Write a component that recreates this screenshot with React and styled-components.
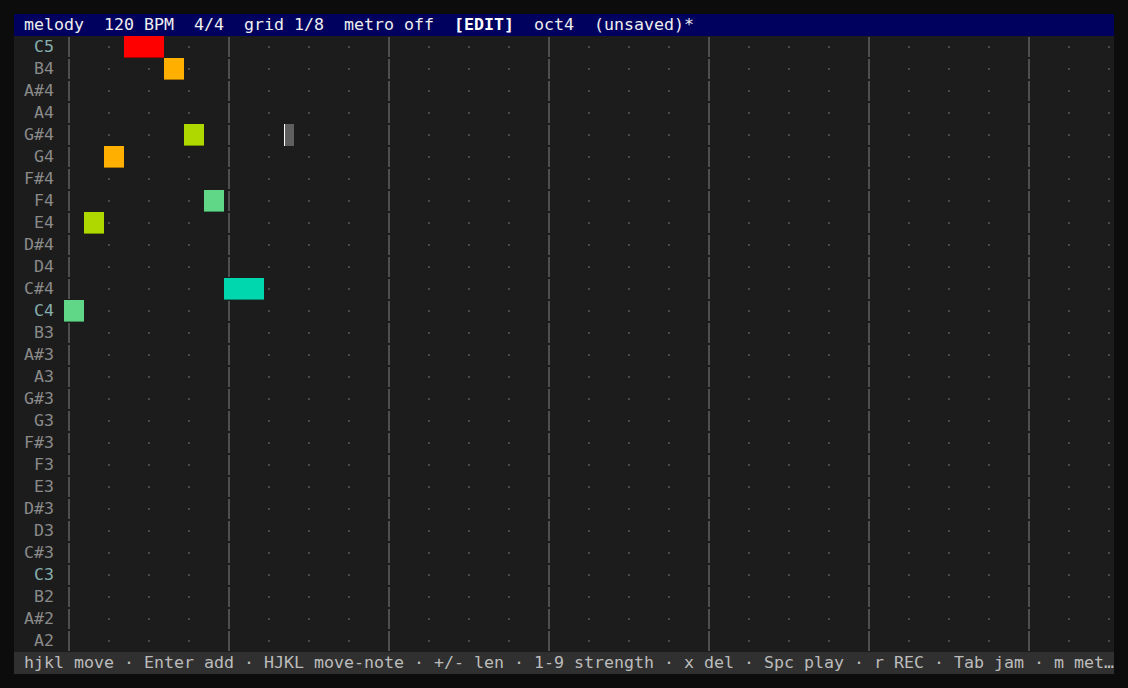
import * as React from "react"
import styled, { createGlobalStyle } from 'styled-components'

const NOTE_NAMES = ["C5", "B4", "A#4", "A4", "G#4", "G4", "F#4", "F4", "E4", "D#4", "D4", "C#4", "C4",
  "B3", "A#3", "A3", "G#3", "G3", "F#3", "F3", "E3", "D#3", "D3", "C#3", "C3", "B2", "A#2", "A2"]

const GRID_COLS = 105 // terminal is 110 cols, first 5 are the label gutter

// notes as step (1/8) + length in steps
const NOTES = [
  { pitch: "C5", step: 3, len: 2, color: "#ff0000" },
  { pitch: "B4", step: 5, len: 1, color: "#ffaf00" },
  { pitch: "G#4", step: 6, len: 1, color: "#afd700" },
  { pitch: "G4", step: 2, len: 1, color: "#ffaf00" },
  { pitch: "F4", step: 7, len: 1, color: "#5fd787" },
  { pitch: "E4", step: 1, len: 1, color: "#afd700" },
  { pitch: "C#4", step: 8, len: 2, color: "#00d7af" },
  { pitch: "C4", step: 0, len: 1, color: "#5fd787" },
]

const CURSOR = { pitch: "G#4", col: 22 }

const HEADER = " melody  120 BPM  4/4  grid 1/8  metro off  "
const FOOTER = " hjkl move · Enter add · HJKL move-note · +/- len · 1-9 strength · x del · Spc play · r REC · Tab jam · m met…"

const cellFor = (pitch, c) => {
  const step = Math.floor(c / 2)
  const note = NOTES.find(n => n.pitch === pitch && step >= n.step && step < n.step + n.len)
  if (note) return { fill: note.color }
  if (CURSOR.pitch === pitch && CURSOR.col === c) return { cursor: true }
  if (c % 16 === 0) return { mark: "bar" }
  if (c % 4 === 0) return { mark: "dot" }
  return {}
}

const App = () => {
  return (
    <Screen>
      <GlobalStyle />
      <Terminal>
        <Header>
          {HEADER}<Bold>[EDIT]</Bold>{"  oct4  (unsaved)*"}
        </Header>
        {NOTE_NAMES.map(pitch => (
          <Row key={pitch}>
            <Label $root={pitch.startsWith("C") && !pitch.includes("#")}>{pitch.padStart(4, " ") + " "}</Label>
            {Array.from({ length: GRID_COLS }, (_, c) => {
              const cell = cellFor(pitch, c)
              return <Cell key={c} $fill={cell.fill} $mark={cell.mark} $cursor={cell.cursor} />
            })}
          </Row>
        ))}
        <Footer>{FOOTER}</Footer>
      </Terminal>
    </Screen>
  )
}

const GlobalStyle = createGlobalStyle`
  html, body {
    margin: 0;
    padding: 0;
    background: #0c0c0d;
  }
`

//Layout
const Screen = styled.div`
  display: flex;
  padding: 14px;
  width: 1128px;
  height: 688px;
  box-sizing: border-box;
  background: #0c0c0d;
`

const Terminal = styled.div`
  display: flex;
  flex-direction: column;
  width: 1100px;
  background: #1c1c1c;
  font-family: "DejaVu Sans Mono", "Liberation Mono", monospace;
  font-size: 16.61px;
  line-height: 22px;
  white-space: pre;
`

const Header = styled.div`
  height: 22px;
  background: #00005f;
  color: #eeeeee;
  overflow: hidden;
`

const Bold = styled.span`
  font-weight: bold;
  color: #ffffff;
`

const Row = styled.div`
  display: flex;
  height: 22px;
`

const Label = styled.span`
  width: 50px;
  flex: none;
  color: ${(props) => props.$root ? "#87afaf" : "#8a8a8a"};
`

const Cell = styled.span`
  position: relative;
  width: 10px;
  height: 22px;
  flex: none;
  background: ${(props) => props.$fill || (props.$cursor ? "#5f5f5f" : "transparent")};
  box-shadow: ${(props) => props.$fill ? "inset 0 -1px 0 rgba(0,0,0,0.35)" : "none"};
  border-left: ${(props) => props.$cursor ? "1px solid #ffffff" : "none"};
  box-sizing: border-box;

  &::before {
    content: "";
    position: absolute;
    display: ${(props) => props.$mark ? "block" : "none"};
    background: ${(props) => props.$mark === "bar" ? "#4e4e4e" : "#4a4a4a"};
    left: 4px;
    width: 2px;
    top: ${(props) => props.$mark === "bar" ? "1px" : "10px"};
    height: ${(props) => props.$mark === "bar" ? "20px" : "2px"};
  }
`

const Footer = styled.div`
  height: 22px;
  background: #303030;
  color: #bcbcbc;
  overflow: hidden;
`

export default App
